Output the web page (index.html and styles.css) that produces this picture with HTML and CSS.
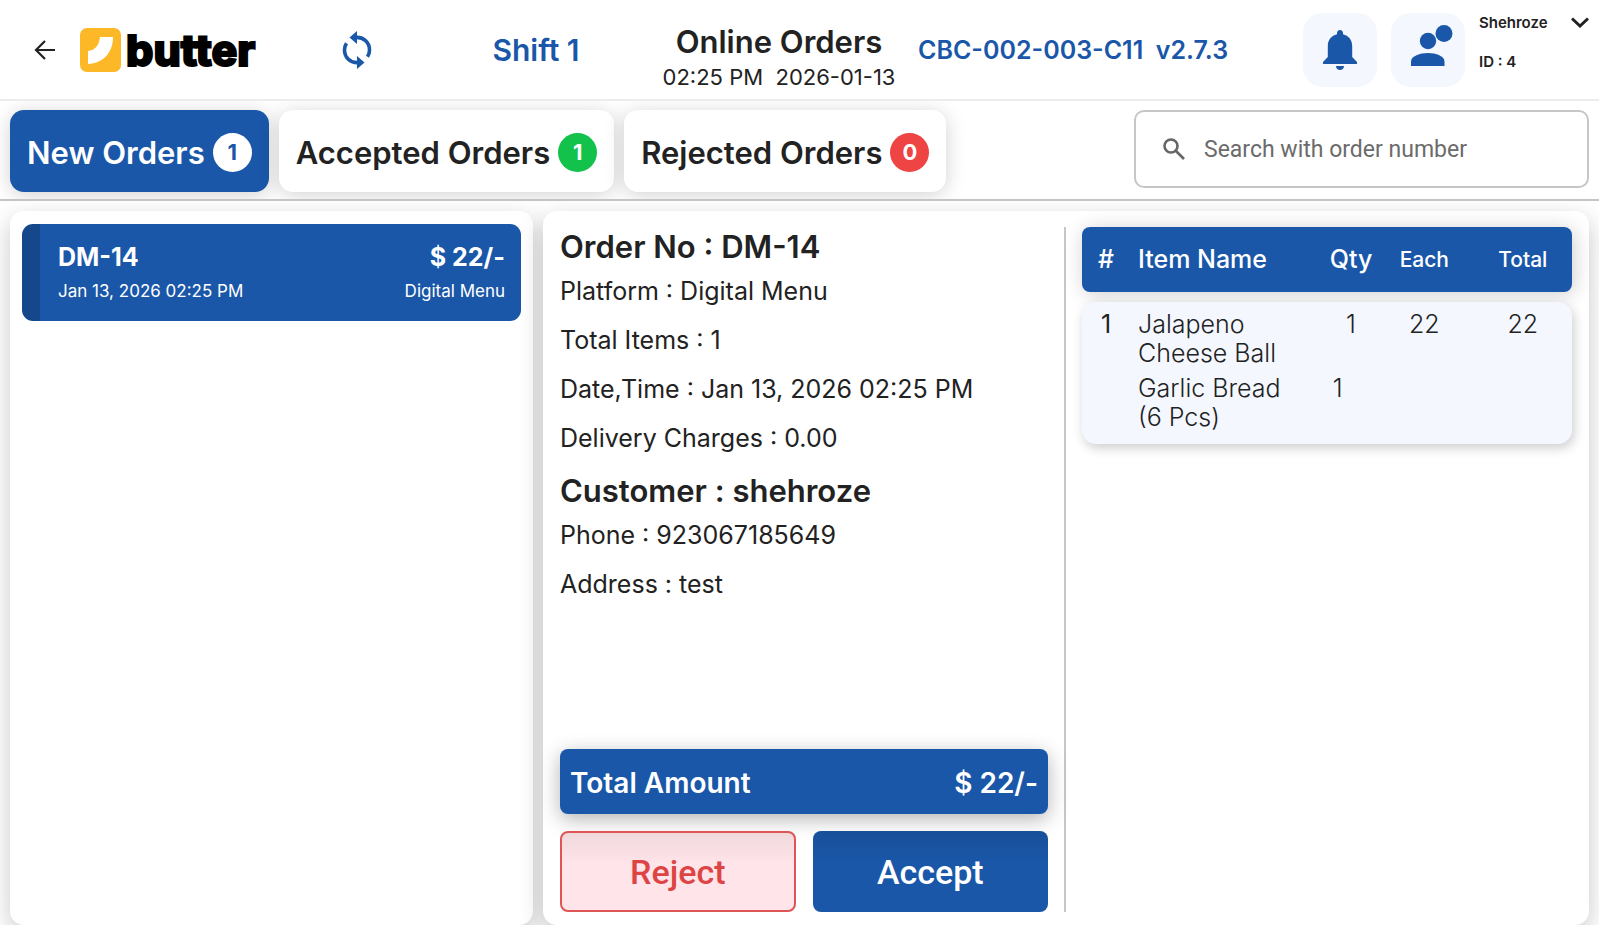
FILE: index.html
```html
<!DOCTYPE html>
<html lang="en">
<head>
    <meta charset="UTF-8">
    <meta name="viewport" content="width=device-width, initial-scale=1.0">
    <title>Online Orders</title>
    <link rel="stylesheet" href="styles.css">
</head>
<body>
    <header class="topbar">
        <div class="brand">
            <button class="icon-button" aria-label="Back">
                <svg width="22" height="22" viewBox="0 0 22 22" fill="none" stroke="#222" stroke-width="2.200">
                    <path d="M21 11H2M11 2L2 11l9 9"/>
                </svg>
            </button>
            <a class="logo" href="#">
                <svg width="41" height="44" viewBox="0 0 41 44">
                    <rect width="41" height="44" rx="7" fill="#fcb826"/>
                    <path d="M20 9h13c0 15-9 26-25 27V23c7-1 11-5 12-14z" fill="#fff"/>
                </svg>
                <span class="logo-text">butter</span>
            </a>
        </div>

        <button class="icon-button sync" aria-label="Sync">
            <svg width="30" height="40" viewBox="0 0 30 40">
                <g fill="none" stroke="#1a57a9" stroke-width="3.600">
                    <path d="M13 7.500C21 6.500 27.500 12 27.500 20c0 2.500-.8 5-2 6.800"/>
                    <path d="M17 32.500C9 33.500 2.500 28 2.500 20c0-2.500.8-5 2-6.800"/>
                </g>
                <path d="M15 1v13L7.500 7.500zM15 39V26l7.500 6.500z" fill="#1a57a9"/>
            </svg>
        </button>

        <div class="shift">Shift 1</div>

        <div class="page-title">
            <h1>Online Orders</h1>
            <p>02:25 PM&nbsp; 2026-01-13</p>
        </div>

        <div class="version">CBC-002-003-C11&nbsp; v2.7.3</div>

        <div class="account">
            <button class="tile" aria-label="Notifications">
                <svg width="34" height="40" viewBox="0 0 34 40" fill="#1a57a9">
                    <path d="M17 0c-2 0-3 1.500-3 3v1.300C8.500 5.600 4.800 10 4.800 16v11L0 32v2h34v-2l-4.800-5V16c0-6-3.700-10.400-9.200-11.700V3c0-1.500-1-3-3-3z"/>
                    <path d="M13 36h8c0 2.500-1.800 4-4 4s-4-1.500-4-4z"/>
                </svg>
            </button>
            <button class="tile" aria-label="User">
                <svg class="user-icon" width="42" height="42" viewBox="0 0 42 42" fill="#1a57a9">
                    <circle cx="17" cy="16" r="8.200"/>
                    <circle cx="33" cy="8.500" r="8.500"/>
                    <path d="M0 41v-4.500C0 31 9 28 17 28s16.500 3 16.500 8.500V41z"/>
                </svg>
            </button>
            <div class="user">
                <button class="user-name">Shehroze
                    <svg width="18" height="11" viewBox="0 0 18 11" fill="none" stroke="#222" stroke-width="3">
                        <path d="M1 1.500l8 7.500 8-7.500"/>
                    </svg>
                </button>
                <span>ID : 4</span>
            </div>
        </div>
    </header>

    <nav class="toolbar">
        <button class="tab active">New Orders <span class="badge">1</span></button>
        <button class="tab">Accepted Orders <span class="badge green">1</span></button>
        <button class="tab">Rejected Orders <span class="badge red">0</span></button>
        <label class="search">
            <svg width="22" height="22" viewBox="0 0 22 22" fill="none" stroke="#666" stroke-width="2.600">
                <circle cx="8" cy="8" r="6.500"/>
                <path d="M13 13l8 8"/>
            </svg>
            <input type="text" placeholder="Search with order number" aria-label="Search with order number">
        </label>
    </nav>

    <main class="content">
        <section class="panel order-list">
            <button class="order-card">
                <span class="order-row big"><span>DM-14</span><span>$ 22/-</span></span>
                <span class="order-row small"><span>Jan 13, 2026 02:25 PM</span><span>Digital Menu</span></span>
            </button>
        </section>

        <section class="panel order">
            <div class="details">
                <h2>Order No : DM-14</h2>
                <p>Platform : Digital Menu</p>
                <p>Total Items : 1</p>
                <p>Date,Time : Jan 13, 2026 02:25 PM</p>
                <p>Delivery Charges : 0.00</p>
                <h2>Customer : shehroze</h2>
                <p>Phone : 923067185649</p>
                <p>Address : test</p>

                <div class="total"><span>Total Amount</span><span>$ 22/-</span></div>
                <div class="actions">
                    <button class="reject">Reject</button>
                    <button class="accept">Accept</button>
                </div>
            </div>

            <div class="items">
                <table>
                    <thead>
                        <tr>
                            <th>#</th>
                            <th class="name">Item Name</th>
                            <th>Qty</th>
                            <th class="price">Each</th>
                            <th class="price last">Total</th>
                        </tr>
                    </thead>
                    <tbody>
                        <tr>
                            <td class="num">1</td>
                            <td class="name">Jalapeno Cheese Ball</td>
                            <td>1</td>
                            <td>22</td>
                            <td class="last">22</td>
                        </tr>
                        <tr>
                            <td></td>
                            <td class="name">Garlic Bread (6&nbsp;Pcs)</td>
                            <td class="sub-qty">1</td>
                            <td></td>
                            <td></td>
                        </tr>
                    </tbody>
                </table>
            </div>
        </section>
    </main>
</body>
</html>
```
FILE: styles.css
```css
* {
    box-sizing: border-box;
}

body {
    margin: 0;
    min-height: 100vh;
    display: flex;
    flex-direction: column;
    font-family: Inter, "Liberation Sans", sans-serif;
    color: #222;
    background-color: #fff;
}

h1, h2, p {
    margin: 0;
}

button {
    font-family: inherit;
    color: inherit;
    border: none;
    padding: 0;
    background: none;
    cursor: pointer;
}

svg {
    display: block;
    flex-shrink: 0;
}

/* top bar */
.topbar {
    display: grid;
    grid-template-columns: 264px 186fr 192fr 274fr 387fr auto;
    align-items: center;
    height: 101px;
    padding-right: 10px;
    border-bottom: 2px solid #ececec;
}

.brand {
    display: flex;
    align-items: center;
    gap: 24px;
    padding-left: 34px;
}

.logo {
    display: flex;
    align-items: center;
    gap: 5px;
    color: #000;
    text-decoration: none;
}

.logo-text {
    font-size: 43px;
    line-height: 42px;
    font-weight: 800;
    -webkit-text-stroke: 2px #000;
    stroke-linejoin: round;
}

.sync {
    justify-self: center;
}

.shift {
    padding-right: 20px;
    text-align: center;
    font-size: 30px;
    line-height: 40px;
    font-weight: 600;
    color: #1a57a9;
}

.page-title {
    padding-top: 17px;
    text-align: center;
    white-space: nowrap;
}

.page-title h1 {
    font-size: 31px;
    line-height: 38px;
    font-weight: 600;
}

.page-title p {
    font-size: 22px;
    line-height: 32px;
}

.version {
    padding-left: 2px;
    font-size: 25px;
    font-weight: 600;
    color: #1a57a9;
    white-space: nowrap;
}

.account {
    display: flex;
    gap: 14px;
}

.tile {
    display: flex;
    align-items: center;
    justify-content: center;
    width: 74px;
    height: 74px;
    border-radius: 20px;
    background-color: #f4f7fe;
}

.user-icon {
    margin: 0 0 8px 8px;
}

.user {
    width: 110px;
    font-size: 15px;
    line-height: 20px;
    font-weight: 600;
}

.user-name {
    display: flex;
    align-items: center;
    justify-content: space-between;
    width: 100%;
    margin-bottom: 19px;
    font-size: 15px;
    line-height: 20px;
    font-weight: 600;
}

/* tabs and search */
.toolbar {
    display: flex;
    gap: 10px;
    padding: 9px 10px 7px;
    border-bottom: 2px solid #c4c4c4;
    overflow: hidden;
}

.tab {
    display: flex;
    align-items: center;
    gap: 8px;
    height: 82px;
    padding: 2px 17px 0;
    border-radius: 14px;
    background-color: #fff;
    box-shadow: 0 3px 20px rgba(0, 0, 0, 0.18);
    font-size: 31px;
    font-weight: 600;
    white-space: nowrap;
}

.tab.active {
    background-color: #1a57a9;
    color: #fff;
}

.badge {
    width: 39px;
    border-radius: 50%;
    background-color: #fff;
    color: #1a57a9;
    font-size: 22px;
    line-height: 39px;
    font-weight: 700;
}

.badge.green {
    background-color: #12c24b;
    color: #fff;
}

.badge.red {
    background-color: #ee4444;
    color: #fff;
}

.search {
    display: flex;
    align-items: center;
    gap: 19px;
    width: 455px;
    height: 78px;
    margin-left: auto;
    padding: 0 27px;
    border: 2px solid #c6c6c6;
    border-radius: 10px;
    background-color: #fff;
}

.search input {
    flex: 1;
    min-width: 0;
    border: none;
    outline: none;
    padding: 0;
    background: none;
    font-family: Roboto, sans-serif;
    font-size: 23px;
}

.search input::placeholder {
    color: #6b6b6b;
}

/* panels */
.content {
    flex: 1;
    display: grid;
    grid-template-columns: 1fr 2fr;
    gap: 10px;
    padding: 10px 10px 0;
    overflow: hidden;
}

.panel {
    border-radius: 14px;
    background-color: #fff;
    box-shadow: 0 8px 24px rgba(0, 0, 0, 0.22);
}

.order-list {
    padding: 13px 12px;
}

.order-card {
    display: block;
    width: 100%;
    padding: 17px 16px 16px 18px;
    border-left: 18px solid #15478a;
    border-radius: 11px;
    background-color: #1a57a9;
    color: #fff;
}

.order-row {
    display: flex;
    justify-content: space-between;
}

.big {
    font-size: 25px;
    line-height: 32px;
    font-weight: 700;
}

.small {
    margin-top: 4px;
    font-size: 17px;
    line-height: 28px;
}

.order {
    display: grid;
    grid-template-columns: 1fr 1fr;
    padding: 16px 0 13px;
}

.details {
    display: flex;
    flex-direction: column;
    padding: 0 16px 0 17px;
    border-right: 2px solid #c6c6c6;
}

.details h2 {
    font-size: 31px;
    line-height: 40px;
    font-weight: 600;
}

.details p {
    font-size: 25px;
    line-height: 49px;
}

.details p + h2 {
    margin-top: 8px;
}

.total {
    display: flex;
    justify-content: space-between;
    margin-top: auto;
    padding: 4px 10px 0;
    border-radius: 8px;
    background-color: #1a57a9;
    box-shadow: 0 5px 20px rgba(0, 0, 0, 0.3);
    color: #fff;
    font-size: 28px;
    line-height: 61px;
    font-weight: 600;
}

.actions {
    display: grid;
    grid-template-columns: 1fr 1fr;
    gap: 17px;
    margin-top: 17px;
}

.actions button {
    height: 81px;
    border-radius: 8px;
    font-family: Roboto, sans-serif;
    font-size: 34px;
    font-weight: 500;
}

.actions .reject {
    border: 2px solid #dd5555;
    background-image: linear-gradient(#f0d8db, #ffe4e9 40%);
    color: #dd4545;
}

.actions .accept {
    background-image: linear-gradient(#184f99, #1a57a9 40%);
    color: #fff;
}

/* item table */
.items {
    padding: 0 17px 0 16px;
}

.items table,
.items thead,
.items tbody {
    display: block;
}

.items tr {
    display: grid;
    grid-template-columns: 48px 184fr 72fr 74fr 110fr;
}

.items th,
.items td {
    padding: 0;
    text-align: center;
    font-size: 25px;
}

.items thead {
    border-radius: 8px;
    background-color: #1a57a9;
    box-shadow: 2px 2px 20px rgba(0, 0, 0, 0.2);
    color: #fff;
}

.items th {
    line-height: 65px;
    font-weight: 500;
}

.items th.price {
    font-size: 21px;
}

.items tbody {
    margin-top: 10px;
    padding: 8px 0 12px;
    border-radius: 14px;
    background-color: #f4f7fe;
    box-shadow: 2px 4px 12px rgba(0, 0, 0, 0.2);
}

.items td {
    line-height: 29px;
    font-weight: 300;
}

.items tbody tr + tr {
    margin-top: 6px;
}

.items td.num {
    font-weight: 400;
}

.items .name {
    padding-left: 8px;
    text-align: left;
}

.items .last {
    padding-left: 12px;
}

.items .sub-qty {
    padding-left: 18px;
    text-align: left;
}
```
